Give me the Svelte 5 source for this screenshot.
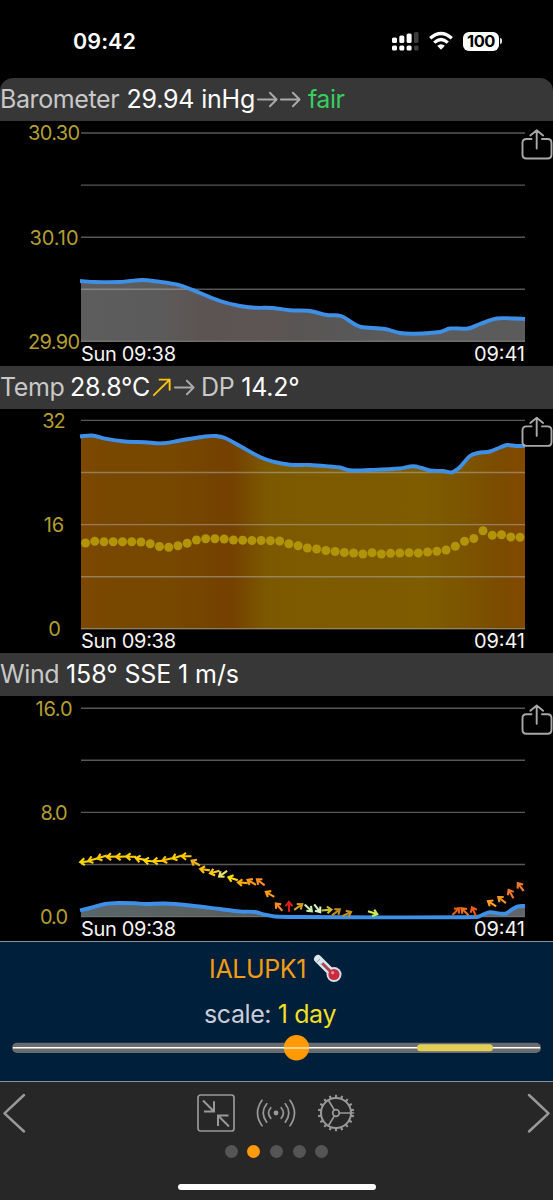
<script>
  const smooth = (p) => {
    let d = `M${p[0][0]} ${p[0][1]}`;
    for (let i = 0; i < p.length - 1; i++) {
      const a = p[i - 1] ?? p[i], b = p[i], c = p[i + 1], e = p[i + 2] ?? c;
      const dx = (c[0] - b[0]) / 3;
      const s1 = c[0] === a[0] ? 0 : (c[1] - a[1]) / (c[0] - a[0]);
      const s2 = e[0] === b[0] ? 0 : (e[1] - b[1]) / (e[0] - b[0]);
      d += `C${b[0] + dx} ${b[1] + dx * s1} ${c[0] - dx} ${c[1] - dx * s2} ${c[0]} ${c[1]}`;
    }
    return d;
  };

  const baro = [[80,281],[95,282],[120,282],[130,281],[142,280],[155,281.2],[180,285.3],[200,293],[220,301],[240,306],[255,307.7],[273,308],[290,310.3],[310,311],[327,315],[341,316],[355,324.5],[361,327],[385,329],[400,333],[415,333.7],[440,332],[450,328.5],[468,328.5],[480,324],[497,318.5],[525,319]];
  const temp = [[80,436.5],[92,435.5],[105,438.7],[125,441.5],[145,442.3],[162,443.3],[180,440.5],[205,436.5],[216,436],[225,438],[240,446],[260,457],[273,461.7],[290,464.7],[310,465],[330,466.5],[340,467.5],[350,470.3],[370,470],[400,468.5],[413,466.3],[422,468],[430,470.5],[443,471],[452,472.3],[460,467],[470,456],[478,453],[490,451.5],[500,447.5],[507,445],[516,446],[525,446]];
  const wind = [[80,910.3],[90,908],[105,904],[118,903],[135,903.3],[145,904],[165,903.5],[190,905.5],[220,909],[240,911.5],[255,912],[265,914.7],[275,916.5],[300,917],[477,917],[483,914.5],[490,912.3],[505,913.7],[512,909.5],[518,906.3],[525,906]];
  const dew = [543,541.3,541.8,541.7,541.7,541.7,542,543.7,546.5,547.3,545.7,543.3,540,538.7,538.7,539,540,540.3,540.5,540.5,540.7,541,543.7,545.7,548,549,550.5,551.5,552.5,553,554,552.7,554,553.3,553,552.7,553,552,551.3,550,546.3,541.3,538.5,530.7,535.3,534.8,537,537.3];
  const arrows = [
    [85,861.7,175,'#ffd800'],[93,859.5,165,'#ffcc00'],[102,857,163,'#ffcc00'],[111.5,856.7,178,'#ffcc00'],[121,856.7,178,'#ffcc00'],[131,856.7,182,'#ffcc00'],
    [140.5,859,190,'#ffcf10'],[149,861,186,'#ffd800'],[158,861,177,'#ffd000'],[167,859.5,166,'#ffc400'],[177,857,162,'#ffcc00'],[186.5,856.3,180,'#ffc800'],
    [195.7,863,210,'#efb020'],[205,869.7,188,'#ffc010'],[214.7,872,165,'#ffcc20'],[223,873.7,145,'#eee36a'],[233,878.7,198,'#ffe000'],[242.7,882.7,185,'#ffac10'],[251.7,882.3,210,'#ff9c18'],[260.7,882.3,218,'#ff9020'],
    [270,894.3,210,'#ff9c18'],[279,907,228,'#ff8c20'],[289,906.7,270,'#dc2020'],[298.3,907,325,'#d0a020'],[308.3,908,43,'#c8f0b0'],[317.3,908.3,52,'#d8f4c8'],[326.7,910,355,'#c8c030'],[336,912.3,322,'#c88a20'],[346.7,914,335,'#c89020'],[372.7,912.7,18,'#cdea50'],
    [456,911.5,315,'#e06018'],[465,911.7,225,'#f07020'],[474,911.7,245,'#e85820'],[492,903.7,213,'#ffa020'],[502,900,218,'#f59420'],[511,894,240,'#f07828'],[520.7,887,233,'#ee7830']
  ];

  const charts = [
    { id: 'baro', top: 121, h: 245, line: baro, base: 341.5, labels: ['30.30', '30.10', '29.90'], lw: [52, 49, 52],
      stops: [[0,'#5d5d5d'],[.18,'#5c5b5b'],[.27,'#5c5452'],[.45,'#5b5554'],[.56,'#585656'],[.7,'#5b5b5b'],[1,'#5b5b5b']] },
    { id: 'temp', top: 409, h: 244, line: temp, base: 629, labels: ['32', '16', '0'], lw: [23.5, 20.5, 11.5],
      stops: [[0,'#7d4900'],[.05,'#784700'],[.2,'#774800'],[.34,'#744100'],[.42,'#7c5900'],[.55,'#7e5a00'],[.77,'#7e5c00'],[.86,'#7c5500'],[.95,'#7b4b00'],[1,'#834900']] },
    { id: 'wind', top: 696, h: 245, line: wind, base: 916.6, labels: ['16.0', '8.0', '0.0'], lw: [37, 27, 28],
      stops: [[0,'#59666b'],[.3,'#59605c'],[.5,'#555'],[1,'#62666a']] }
  ];
  const grid = (top) => [0, 1, 2, 3, 4].map((i) => (top === 409 ? 408.4 : top === 696 ? 696.2 : 121) + 12 + i * 52.1);
  const teeth = Array.from({ length: 18 }, (_, i) => i * 20 + 10);
</script>

{#snippet arrow(rot, color)}
  <svg class="trend" viewBox="0 0 24 24" style:color={color}>
    {#if rot}
      <path d="M4 20L20.5 3.8M10 3.8H20.5V14.3" />
    {:else}
      <path d="M2 12H21M14.5 5L21.5 12L14.5 19" />
    {/if}
  </svg>
{/snippet}

{#snippet chart(c)}
  <svg class="chart" width="553" height={c.h} viewBox="0 {c.top} 553 {c.h}">
    <defs>
      <linearGradient id={c.id} gradientUnits="userSpaceOnUse" x1="81" x2="525" y1="0" y2="0">
        {#each c.stops as s}<stop offset={s[0]} stop-color={s[1]} />{/each}
      </linearGradient>
    </defs>
    <path d="{smooth(c.line)}V{c.base}H81V{c.line[0][1]}Z" fill="url(#{c.id})" />
    {#each grid(c.top) as y}<line x1="81" x2="525" y1={y} y2={y} class="grid" />{/each}
    {#if c.id === 'temp'}
      {#each dew as y, i}<circle cx={85.5 + i * 9.245} cy={y} r="4.5" fill="#b19408" />{/each}
    {/if}
    <path d={smooth(c.line)} class="line" />
    {#if c.id === 'wind'}
      {#each arrows as a}
        <path d="M-5 0H4.5M.5-3.4L4.8 0L.5 3.4" transform="translate({a[0]} {a[1]}) rotate({a[2]})" stroke={a[3]} class="wind" />
      {/each}
    {/if}
    {#each c.labels as l, i}
      <text class="axis" x={54 - c.lw[i] / 2} y={grid(c.top)[i * 2] + 7.3} textLength={c.lw[i]}>{l}</text>
    {/each}
    <text class="time" x="81" y={grid(c.top)[4] + 19.3} textLength="95">Sun 09:38</text>
    <text class="time" x="474" y={grid(c.top)[4] + 19.3} textLength="51">09:41</text>
    <path class="share" transform="translate(-.5 {grid(c.top)[0] - 132.5})" d="M532 138.5H527Q523 138.5 523 142.5V154Q523 158 527 158H548Q552 158 552 154V142.5Q552 138.5 548 138.5H542.5M537.2 148V130.5M530.8 135L537.2 129.8L543.6 135" />
  </svg>
{/snippet}

<main>
  <header class="status">
    <span class="clock">09:42</span>
    <div class="signals">
      <svg width="28" height="22" viewBox="0 0 28 22">
        <g fill="#fff"><rect x="1" y="7.5" width="5" height="5.5" rx="1.5"/><rect x="8.3" y="5.5" width="5" height="7.5" rx="1.5"/><rect x="15.6" y="3.5" width="5" height="9.5" rx="1.5"/><rect x="1" y="15.5" width="5" height="5" rx="1.5"/><rect x="8.3" y="15.5" width="5" height="5" rx="1.5"/><rect x="15.6" y="15.5" width="5" height="5" rx="1.5"/></g>
        <g fill="#3d3d3d"><rect x="23" y="2" width="4.5" height="11" rx="1.5"/><rect x="23" y="15.5" width="4.5" height="5" rx="1.5"/></g>
      </svg>
      <svg class="wifi" width="26" height="20" viewBox="0 0 26 20">
        <g fill="none" stroke="#fff" stroke-width="3.3"><path d="M2.2 7.3Q13-2.3 23.8 7.3"/><path d="M6.2 11.6Q13 5.4 19.8 11.6"/></g>
        <path fill="#fff" d="M9.2 14.7Q13 11.6 16.8 14.7L13 18.7Z"/>
      </svg>
      <div class="battery">100</div><i></i>
    </div>
  </header>

  <section>
    <h2 class="first"><span style:width="126.5px">Barometer</span><b style:width="129.5px">29.94 inHg</b>{@render arrow(0, '#aaa')}{@render arrow(0, '#aaa')}<em>fair</em></h2>
    {@render chart(charts[0])}
  </section>
  <section>
    <h2><span style:width="70px">Temp</span><b style:width="80px">28.8°C</b>{@render arrow(-45, '#ffc20d')}{@render arrow(0, '#aaa')}<span class="dp">DP</span><b>14.2°</b></h2>
    {@render chart(charts[1])}
  </section>
  <section>
    <h2><span style:width="66px">Wind</span><b class="ws">158° SSE 1 m/s</b></h2>
    {@render chart(charts[2])}
  </section>

  <section class="scale">
    <div class="station"><span>IALUPK1</span>
      <svg width="30" height="30" viewBox="0 0 30 30">
        <path d="M5 5L20.5 20.5" stroke="#dbe6ee" stroke-width="7.8" stroke-linecap="round"/>
        <circle cx="21" cy="20.5" r="7.5" fill="#d7dfe7"/>
        <path d="M10 10L20 20" stroke="#a9454f" stroke-width="3" stroke-linecap="round"/>
        <circle cx="21" cy="20.5" r="5.6" fill="#c92c3c"/><circle cx="19.7" cy="18.7" r="1.6" fill="#ee9098"/>
        <path d="M4 8L7 5M7.5 11L10.5 8" stroke="#91a2b0"/>
      </svg>
    </div>
    <div class="value">scale: <span>1 day</span></div>
    <svg class="slider" width="553" height="28" viewBox="0 1034 553 28">
      <rect x="12" y="1042.7" width="529" height="10.3" rx="5" fill="#696c6f"/>
      <circle cx="296.5" cy="1047.8" r="12.7" fill="#ff9a05"/>
      <path d="M13 1047.7H540" stroke="#fff" stroke-width="1.5"/>
      <path d="M284 1047.7H309" stroke="#ffd18b" stroke-width="1.5"/>
      <rect x="417" y="1044.3" width="76" height="7" rx="3.5" fill="#e2cf56"/>
    </svg>
  </section>

  <footer>
    <nav>
      <svg width="28" height="44" viewBox="0 0 28 44"><path class="chev" d="M24 4L4.5 22.3L24 40.5"/></svg>
      <div class="tools">
        <svg width="40" height="40" viewBox="0 0 40 40"><rect x="2" y="2" width="36" height="36" rx="2.5"/><path class="thick" d="M7 7.5L17.5 18M18 8.3V18.5H8M33 33.5L22.5 23M22 33V22.5H32.5"/></svg>
        <svg width="40" height="40" viewBox="0 0 40 40"><circle cx="20" cy="20" r="2.4" fill="#999" stroke="none"/><path d="M14.8 14.7Q10.3 20 14.8 25.3M25.2 14.7Q29.7 20 25.2 25.3M10.7 10.8Q3.7 20 10.7 29.2M29.3 10.8Q36.3 20 29.3 29.2M6 7.3Q-3 20 6 32.7M34 7.3Q43 20 34 32.7"/></svg>
        <svg width="40" height="40" viewBox="0 0 40 40"><circle cx="20" cy="20" r="15" stroke-width="2"/><circle cx="20" cy="20" r="3.3"/><path d="M23.3 20H37.5M18.4 17.1L12.3 7M18.4 22.9L12.3 33"/>{#each teeth as t}<path class="tooth" d="M35 20H38.2" transform="rotate({t} 20 20)"/>{/each}</svg>
      </div>
      <svg width="28" height="44" viewBox="0 0 28 44"><path class="chev" d="M4 4L23.5 22.3L4 40.5"/></svg>
    </nav>
    <div class="pages">{#each [0, 1, 2, 3, 4] as p}<i class:on={p === 1}></i>{/each}</div>
    <div class="home"></div>
  </footer>
</main>

<style>
  :global(body) { background: #000; }
  main { width: 553px; height: 1200px; background: #000; color: #fff; font-family: Inter, "Liberation Sans", sans-serif; display: flex; flex-direction: column; overflow: hidden; }
  .status { height: 78px; flex: none; box-sizing: border-box; padding: 4px 51px 0 73px; display: flex; align-items: center; justify-content: space-between; }
  .clock { font-size: 21.5px; font-weight: 600; letter-spacing: .1px; }
  .signals { display: flex; align-items: center; }
  .wifi { margin: 0 9px 0 9px; }
  .battery { width: 36px; height: 19px; border-radius: 6px; background: #fff; color: #000; font-size: 16.5px; line-height: 19px; font-weight: 700; text-align: center; letter-spacing: -.5px; }
  .signals i { width: 2px; height: 6px; background: #ddd; border-radius: 0 2px 2px 0; margin-left: 1px; }
  section { flex: none; }
  h2 { margin: 0; height: 43px; background: #373737; display: flex; align-items: center; font-size: 25px; font-weight: 400; line-height: 43px; letter-spacing: -.4px; white-space: pre; }
  h2.first { border-radius: 13px 13px 0 0; }
  h2 span { color: #c8c8c8; flex: none; }
  h2 b { color: #fff; font-weight: 400; flex: none; letter-spacing: -.2px; }
  h2 .ws { letter-spacing: -.1px; }
  h2 em { color: #35cf60; font-style: normal; margin-left: 6px; letter-spacing: -.5px; }
  .dp { margin: 0 7px 0 5px; }
  .trend { width: 23px; height: 23px; flex: none; fill: none; stroke: currentColor; stroke-width: 2; stroke-linecap: round; stroke-linejoin: round; }
  .chart { display: block; }
  .grid { stroke: #b8b8b8; stroke-opacity: .47; stroke-width: 1.4; }
  .line { fill: none; stroke: #3e8fe6; stroke-width: 3.9; }
  .wind { fill: none; stroke-width: 2.1; }
  .share { fill: none; stroke: #a8a8a8; stroke-width: 1.9; stroke-linecap: round; stroke-linejoin: round; }
  .axis { fill: #b39f2f; font-size: 20px; }
  .time { fill: #f4f4f4; font-size: 20px; }
  .scale { height: 141px; box-sizing: border-box; background: #001f3a; border-top: 1.5px solid #8792a0; border-bottom: 1.5px solid #8792a0; display: flex; flex-direction: column; align-items: center; }
  .station { display: flex; align-items: center; gap: 7px; height: 32px; margin-top: 11px; margin-right: 1px; color: #f49b16; font-size: 25px; letter-spacing: -.4px; }
  .value { font-size: 25px; line-height: 30px; margin-top: 14px; color: #c8ced8; letter-spacing: -.4px; margin-right: 13px; }
  .value span { color: #f0df24; }
  .slider { display: block; margin-top: 5px; }
  footer { flex: 1; background: #272727; display: flex; flex-direction: column; align-items: center; }
  nav { width: 100%; display: flex; justify-content: space-between; align-items: center; margin-top: 9px; height: 44px; }
  footer svg { fill: none; stroke: #999; stroke-width: 1.7; stroke-linecap: round; stroke-linejoin: round; }
  .chev { stroke-width: 2.5; }
  .thick { stroke-width: 2; stroke-linecap: butt; stroke-linejoin: miter; }
  .tooth { stroke-width: 2.1; stroke-linecap: butt; }
  .tools { display: flex; gap: 20px; margin-right: 2px; }
  .pages { display: flex; gap: 9.6px; margin-top: 9.5px; }
  .pages i { width: 13px; height: 13px; border-radius: 50%; background: #555; }
  .pages i.on { background: #ff9a0a; }
  .home { width: 198px; height: 6px; border-radius: 3px; background: #fff; margin-top: 26px; }
</style>
